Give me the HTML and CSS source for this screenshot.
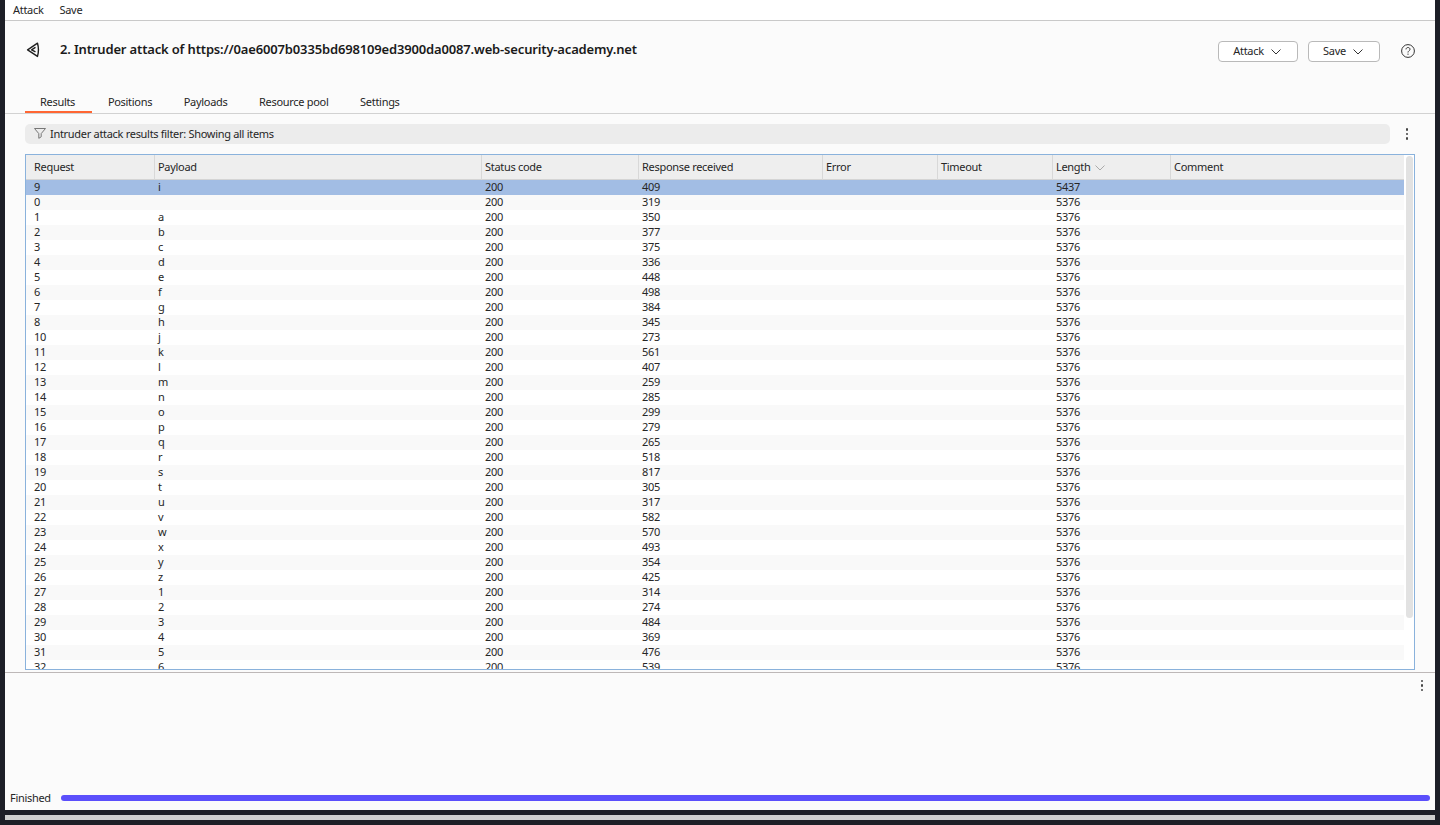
FILE: index.html
```html
<!DOCTYPE html>
<html lang="en">
<head>
<meta charset="utf-8">
<title>Intruder attack</title>
<link rel="stylesheet" href="styles.css">
</head>
<body>
<div class="app">
  <nav class="menubar"><span>Attack</span><span>Save</span></nav>
  <header class="titlebar">
    <svg class="logo" width="14" height="16" viewBox="0 0 14 16" fill="none" stroke="#1f1f1f" stroke-width="1.4" stroke-linejoin="round" stroke-linecap="round"><path d="M11.5 1.2 1.6 7.8 11.5 14.4Q13.4 7.8 11.5 1.2Z"/><path d="M9 5.6 5.6 7.8 9 9.6"/></svg>
    <h1 class="title">2. Intruder attack of https://0ae6007b0335bd698109ed3900da0087.web-security-academy.net</h1>
    <button class="btn btn-attack">Attack<svg width="10" height="6" viewBox="0 0 10 6" fill="none" stroke="#333" stroke-width="1"><path d="M.5.5 5 5 9.5.5"/></svg></button>
    <button class="btn btn-save">Save<svg width="10" height="6" viewBox="0 0 10 6" fill="none" stroke="#333" stroke-width="1"><path d="M.5.5 5 5 9.5.5"/></svg></button>
    <svg class="help" width="14" height="14" viewBox="0 0 14 14" fill="none" stroke="#333"><circle cx="7" cy="7" r="6.4"/><path d="M5 5.4C5 4.2 5.9 3.5 7 3.5s2 .7 2 1.8C9 6.7 7 6.8 7 8.5"/><path d="M7 9.6v1.2"/></svg>
  </header>
  <div class="tabs">
    <span class="tab active">Results</span><span class="tab">Positions</span><span class="tab">Payloads</span><span class="tab">Resource pool</span><span class="tab">Settings</span>
  </div>
  <div class="filter-row">
    <div class="filter"><svg width="12" height="11" viewBox="0 0 12 11" fill="none" stroke="#777" stroke-width="1"><path d="M.5.5h11L7.2 5.6v3.2L4.8 10.3V5.6Z"/></svg>Intruder attack results filter: Showing all items</div>
    <div class="dots"><i></i><i></i><i></i></div>
  </div>
  <div class="results">
    <div class="table-wrap">
      <table class="grid">
        <colgroup><col class="c1"><col class="c2"><col class="c3"><col class="c4"><col class="c5"><col class="c6"><col class="c7"><col class="c8"></colgroup>
        <thead><tr><th>Request</th><th>Payload</th><th>Status code</th><th>Response received</th><th>Error</th><th>Timeout</th><th>Length<svg class="sort" width="10" height="6" viewBox="0 0 10 6" fill="none" stroke="#aaa" stroke-width="1"><path d="M.5.5 5 5 9.5.5"/></svg></th><th>Comment</th></tr></thead>
        <tbody>
          <tr class="sel"><td>9</td><td>i</td><td>200</td><td>409</td><td></td><td></td><td>5437</td><td></td></tr>
          <tr><td>0</td><td></td><td>200</td><td>319</td><td></td><td></td><td>5376</td><td></td></tr>
          <tr><td>1</td><td>a</td><td>200</td><td>350</td><td></td><td></td><td>5376</td><td></td></tr>
          <tr><td>2</td><td>b</td><td>200</td><td>377</td><td></td><td></td><td>5376</td><td></td></tr>
          <tr><td>3</td><td>c</td><td>200</td><td>375</td><td></td><td></td><td>5376</td><td></td></tr>
          <tr><td>4</td><td>d</td><td>200</td><td>336</td><td></td><td></td><td>5376</td><td></td></tr>
          <tr><td>5</td><td>e</td><td>200</td><td>448</td><td></td><td></td><td>5376</td><td></td></tr>
          <tr><td>6</td><td>f</td><td>200</td><td>498</td><td></td><td></td><td>5376</td><td></td></tr>
          <tr><td>7</td><td>g</td><td>200</td><td>384</td><td></td><td></td><td>5376</td><td></td></tr>
          <tr><td>8</td><td>h</td><td>200</td><td>345</td><td></td><td></td><td>5376</td><td></td></tr>
          <tr><td>10</td><td>j</td><td>200</td><td>273</td><td></td><td></td><td>5376</td><td></td></tr>
          <tr><td>11</td><td>k</td><td>200</td><td>561</td><td></td><td></td><td>5376</td><td></td></tr>
          <tr><td>12</td><td>l</td><td>200</td><td>407</td><td></td><td></td><td>5376</td><td></td></tr>
          <tr><td>13</td><td>m</td><td>200</td><td>259</td><td></td><td></td><td>5376</td><td></td></tr>
          <tr><td>14</td><td>n</td><td>200</td><td>285</td><td></td><td></td><td>5376</td><td></td></tr>
          <tr><td>15</td><td>o</td><td>200</td><td>299</td><td></td><td></td><td>5376</td><td></td></tr>
          <tr><td>16</td><td>p</td><td>200</td><td>279</td><td></td><td></td><td>5376</td><td></td></tr>
          <tr><td>17</td><td>q</td><td>200</td><td>265</td><td></td><td></td><td>5376</td><td></td></tr>
          <tr><td>18</td><td>r</td><td>200</td><td>518</td><td></td><td></td><td>5376</td><td></td></tr>
          <tr><td>19</td><td>s</td><td>200</td><td>817</td><td></td><td></td><td>5376</td><td></td></tr>
          <tr><td>20</td><td>t</td><td>200</td><td>305</td><td></td><td></td><td>5376</td><td></td></tr>
          <tr><td>21</td><td>u</td><td>200</td><td>317</td><td></td><td></td><td>5376</td><td></td></tr>
          <tr><td>22</td><td>v</td><td>200</td><td>582</td><td></td><td></td><td>5376</td><td></td></tr>
          <tr><td>23</td><td>w</td><td>200</td><td>570</td><td></td><td></td><td>5376</td><td></td></tr>
          <tr><td>24</td><td>x</td><td>200</td><td>493</td><td></td><td></td><td>5376</td><td></td></tr>
          <tr><td>25</td><td>y</td><td>200</td><td>354</td><td></td><td></td><td>5376</td><td></td></tr>
          <tr><td>26</td><td>z</td><td>200</td><td>425</td><td></td><td></td><td>5376</td><td></td></tr>
          <tr><td>27</td><td>1</td><td>200</td><td>314</td><td></td><td></td><td>5376</td><td></td></tr>
          <tr><td>28</td><td>2</td><td>200</td><td>274</td><td></td><td></td><td>5376</td><td></td></tr>
          <tr><td>29</td><td>3</td><td>200</td><td>484</td><td></td><td></td><td>5376</td><td></td></tr>
          <tr><td>30</td><td>4</td><td>200</td><td>369</td><td></td><td></td><td>5376</td><td></td></tr>
          <tr><td>31</td><td>5</td><td>200</td><td>476</td><td></td><td></td><td>5376</td><td></td></tr>
          <tr><td>32</td><td>6</td><td>200</td><td>539</td><td></td><td></td><td>5376</td><td></td></tr>
        </tbody>
      </table>
      <div class="scrollbar"><div class="thumb"></div></div>
    </div>
  </div>
  <div class="detail">
    <div class="dots"><i></i><i></i><i></i></div>
  </div>
  <footer class="status">
    <span class="status-label">Finished</span>
    <div class="progress"></div>
  </footer>
</div>
<div class="taskbar"></div>
</body>
</html>
```
FILE: styles.css
```css
* { box-sizing: border-box; }
html, body { margin: 0; height: 825px; overflow: hidden; background: #1d1f27; }
body { font: 11px/15px "Noto Sans", sans-serif; letter-spacing: -0.3px; color: #262626; display: flex; flex-direction: column; }
.app { margin: 0 5px; height: 810px; background: #fbfbfb; display: flex; flex-direction: column; }

.menubar { height: 21px; flex: none; background: #fff; border-bottom: 1px solid #c9c9c9; display: flex; gap: 16px; padding: 2px 0 0 8px; }

.titlebar { height: 73px; flex: none; display: flex; align-items: flex-start; padding: 20px 20px 0 21px; }
.logo { flex: none; margin-right: 20px; margin-top: 1px; }
.title { flex: 1; margin: -1px 0 0; font-size: 13px; font-weight: 600; letter-spacing: -0.16px; line-height: 18px; color: #1a1a1a; white-space: nowrap; }
.btn { flex: none; height: 21px; margin: 0; padding: 0 2px 2px 0; background: #fff; border: 1px solid #b9b9b9; border-radius: 4px; font: inherit; letter-spacing: inherit; color: #262626; display: flex; align-items: center; justify-content: center; gap: 7px; }
.btn svg { margin-top: 2px; }
.btn-attack { width: 80px; margin-right: 10px; }
.btn-save { width: 72px; margin-right: 21px; }
.help { flex: none; margin-top: 3px; }

.tabs { height: 20px; flex: none; border-bottom: 1px solid #d2d2d2; padding-left: 20px; display: flex; }
.tab { height: 19px; padding: 0 15.8px; }
.tab.active { height: 19px; border-bottom: 2px solid #ff6633; padding: 0 17px 0 15px; margin-right: 0; }

.filter-row { height: 20px; margin-top: 10px; flex: none; display: flex; padding-left: 20px; }
.filter { width: 1365px; background: #ececec; border-radius: 5px; display: flex; align-items: center; gap: 4px; padding: 0 0 1px 9px; }
.dots { display: flex; flex-direction: column; align-items: center; justify-content: center; gap: 2px; width: 4px; }
.dots i { width: 2.4px; height: 2.4px; border-radius: 50%; background: #444; }
.filter-row .dots { margin-left: 15px; }

.results { flex: none; margin: 10px 20px 0 20px; height: 516px; }
.table-wrap { position: relative; height: 516px; border: 1px solid #8ab2dc; background: #fff; overflow: hidden; }
.grid { width: 1378px; table-layout: fixed; border-collapse: separate; border-spacing: 0; }
.c1 { width: 129px; } .c2 { width: 327px; } .c3 { width: 157px; } .c4 { width: 184px; }
.c5 { width: 115px; } .c6 { width: 115px; } .c7 { width: 118px; } .c8 { width: 233px; }
.grid th { height: 25px; padding: 0 0 1px 3px; background: #eeeeee; border-right: 1px solid #d8d8d8; border-bottom: 1px solid #d4d4d4; font-weight: 400; text-align: left; }
.grid th:first-child, .grid td:first-child { padding-left: 8px; }
.grid th:last-child { border-right: 0; }
.grid td { height: 15px; padding: 0 0 2px 3px; line-height: 13px; white-space: nowrap; }
.grid tbody tr:nth-child(even) { background: #f9f9f9; }
.grid tbody tr.sel { background: #a2bde4; }
.sort { margin-left: 4px; }
.scrollbar { position: absolute; right: 1px; top: 1px; bottom: 0; width: 7px; }
.thumb { height: 462px; background: #e2e2e2; border-radius: 4px; }

.detail { flex: 1; margin-top: 2px; border-top: 1px solid #bdb8b8; padding: 7px 11px 0 0; display: flex; justify-content: flex-end; align-items: flex-start; }

.status { height: 31px; flex: none; display: flex; align-items: center; padding: 7px 5px 0 5px; gap: 10px; }
.status-label { margin-bottom: 2px; }
.status .progress { flex: 1; height: 6px; background: #5b4ffb; border-radius: 3px; }

.taskbar { height: 5px; margin: 5px 5px 0; flex: none; background: #cfcfcf; }
```
